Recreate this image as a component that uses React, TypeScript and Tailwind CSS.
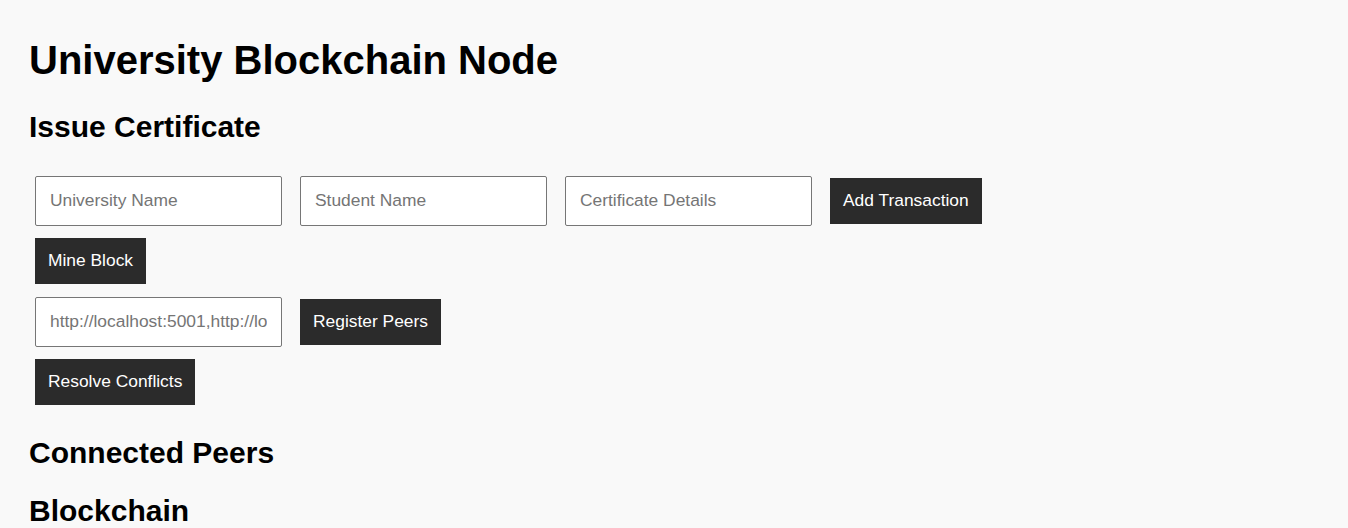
import React from "react";

const font = { fontFamily: '"Liberation Sans", Arial, sans-serif' };

function Field({ placeholder }: { placeholder: string }) {
  return (
    <input
      type="text"
      placeholder={placeholder}
      className="h-[50px] w-[247px] shrink-0 rounded-[2px] border border-[#767676] bg-white px-[14px] pb-[2px] text-[17.4px] text-black outline-none placeholder:text-[#757575]"
    />
  );
}

function Btn({ children }: { children: React.ReactNode }) {
  return (
    <button className="flex h-[46px] shrink-0 items-center bg-[#2b2b2b] px-[13px] pb-[2px] text-[17.4px] text-white">
      {children}
    </button>
  );
}

export default function App() {
  return (
    <div className="min-h-screen bg-[#f9f9f9] pl-[29px] pr-[30px] pt-[37px] pb-[20px] text-black" style={font}>
      <h1 className="text-[40px] font-bold leading-[46px]">University Blockchain Node</h1>
      <h2 className="mt-[27px] text-[30px] font-bold leading-[34px]">Issue Certificate</h2>

      <div className="ml-[6px] mt-[32px] flex items-center gap-[18px]">
        <Field placeholder="University Name" />
        <Field placeholder="Student Name" />
        <Field placeholder="Certificate Details" />
        <Btn>Add Transaction</Btn>
      </div>

      <div className="ml-[6px] mt-[12px] flex">
        <Btn>Mine Block</Btn>
      </div>

      <div className="ml-[6px] mt-[13px] flex items-center gap-[18px]">
        <Field placeholder="http://localhost:5001,http://localhost:5002" />
        <Btn>Register Peers</Btn>
      </div>

      <div className="ml-[6px] mt-[12px] flex">
        <Btn>Resolve Conflicts</Btn>
      </div>

      <h2 className="mt-[31px] text-[30px] font-bold leading-[34px]">Connected Peers</h2>
      <h2 className="mt-[24px] text-[30px] font-bold leading-[34px]">Blockchain</h2>
    </div>
  );
}
